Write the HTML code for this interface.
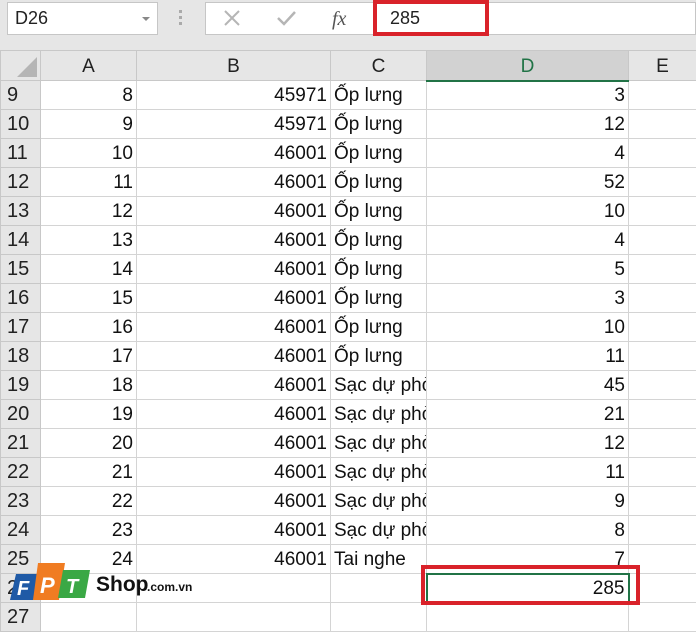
<!DOCTYPE html>
<html><head><meta charset="utf-8"><style>
*{margin:0;padding:0;box-sizing:border-box}
body{width:696px;height:618px;overflow:hidden;background:#fff;font-family:"Liberation Sans",sans-serif;position:relative}
.tb{position:absolute;left:0;top:0;width:696px;height:50px;background:#e6e6e6}
.nb{position:absolute;left:7px;top:2px;width:151px;height:33px;background:#fff;border:1px solid #c6c6c6;font-size:18px;line-height:31px;padding-left:7px;color:#222}
.nb .ar{position:absolute;right:7px;top:14px;border-left:4px solid transparent;border-right:4px solid transparent;border-top:4px solid #888}
.dots{position:absolute;left:179px;top:10px;width:3px;height:16px;background:repeating-linear-gradient(#aaa 0 3px,transparent 3px 6px)}
.fb{position:absolute;left:205px;top:2px;width:491px;height:33px;background:#fff;border:1px solid #c6c6c6}
.red1{position:absolute;left:373px;top:0px;width:116px;height:36px;border:4px solid #d9222a}
.fv{position:absolute;left:390px;top:2px;font-size:18px;line-height:33px;color:#222}
table{position:absolute;left:0;top:50px;width:696px;border-collapse:collapse;table-layout:fixed}
td{border:1px solid #d4d4d4;height:29px;font-size:19px;line-height:27px;padding:0 3px;white-space:nowrap;overflow:hidden;color:#111;vertical-align:bottom}
tr.h td{background:#e6e6e6;text-align:center;border-color:#c8c8c8;height:30px;color:#222}
td.rh{background:#e6e6e6;text-align:left;padding-left:6px;border-color:#c8c8c8;color:#222;font-size:20px}
td.r{text-align:right}
.red2{position:absolute;left:421px;top:565px;width:219px;height:40px;border:4px solid #d9222a}
</style></head><body>
<div class="tb"></div>
<div class="nb">D26<span class="ar"></span></div>
<div class="dots"></div>
<div class="fb">
<svg width="160" height="31" style="position:absolute;left:0;top:0">
<path d="M19 8 L33 22 M33 8 L19 22" stroke="#b5b5b5" stroke-width="2"/>
<path d="M72 15 L78 21 L89 9" stroke="#b5b5b5" stroke-width="2.5" fill="none"/>
<text x="126" y="22" font-family="Liberation Serif" font-style="italic" font-size="20" fill="#555">fx</text>
</svg></div>
<div class="fv">285</div>
<div class="red1"></div>
<table>
<colgroup><col style="width:40px"><col style="width:96px"><col style="width:194px"><col style="width:96px"><col style="width:202px"><col style="width:68px"></colgroup>
<tr class="h"><td style="position:relative"><svg width="30" height="26" style="position:absolute;left:8px;top:2px"><path d="M28 4 L28 24 L8 24 Z" fill="#b5b5b5"/></svg></td><td>A</td><td>B</td><td>C</td><td style="background:#d2d2d2;color:#217346;border-bottom:2px solid #217346">D</td><td>E</td></tr>
<tr><td class="rh">9</td><td class="r">8</td><td class="r">45971</td><td>Ốp lưng</td><td class="r">3</td><td></td></tr>
<tr><td class="rh">10</td><td class="r">9</td><td class="r">45971</td><td>Ốp lưng</td><td class="r">12</td><td></td></tr>
<tr><td class="rh">11</td><td class="r">10</td><td class="r">46001</td><td>Ốp lưng</td><td class="r">4</td><td></td></tr>
<tr><td class="rh">12</td><td class="r">11</td><td class="r">46001</td><td>Ốp lưng</td><td class="r">52</td><td></td></tr>
<tr><td class="rh">13</td><td class="r">12</td><td class="r">46001</td><td>Ốp lưng</td><td class="r">10</td><td></td></tr>
<tr><td class="rh">14</td><td class="r">13</td><td class="r">46001</td><td>Ốp lưng</td><td class="r">4</td><td></td></tr>
<tr><td class="rh">15</td><td class="r">14</td><td class="r">46001</td><td>Ốp lưng</td><td class="r">5</td><td></td></tr>
<tr><td class="rh">16</td><td class="r">15</td><td class="r">46001</td><td>Ốp lưng</td><td class="r">3</td><td></td></tr>
<tr><td class="rh">17</td><td class="r">16</td><td class="r">46001</td><td>Ốp lưng</td><td class="r">10</td><td></td></tr>
<tr><td class="rh">18</td><td class="r">17</td><td class="r">46001</td><td>Ốp lưng</td><td class="r">11</td><td></td></tr>
<tr><td class="rh">19</td><td class="r">18</td><td class="r">46001</td><td>Sạc dự phò</td><td class="r">45</td><td></td></tr>
<tr><td class="rh">20</td><td class="r">19</td><td class="r">46001</td><td>Sạc dự phò</td><td class="r">21</td><td></td></tr>
<tr><td class="rh">21</td><td class="r">20</td><td class="r">46001</td><td>Sạc dự phò</td><td class="r">12</td><td></td></tr>
<tr><td class="rh">22</td><td class="r">21</td><td class="r">46001</td><td>Sạc dự phò</td><td class="r">11</td><td></td></tr>
<tr><td class="rh">23</td><td class="r">22</td><td class="r">46001</td><td>Sạc dự phò</td><td class="r">9</td><td></td></tr>
<tr><td class="rh">24</td><td class="r">23</td><td class="r">46001</td><td>Sạc dự phò</td><td class="r">8</td><td></td></tr>
<tr><td class="rh">25</td><td class="r">24</td><td class="r">46001</td><td>Tai nghe</td><td class="r">7</td><td></td></tr>
<tr><td class="rh">26</td><td></td><td></td><td></td><td class="r" style="border:2px solid #217346">285</td><td></td></tr>
<tr><td class="rh">27</td><td></td><td></td><td></td><td></td><td></td></tr>
</table>
<div class="red2"></div>
<svg width="200" height="45" style="position:absolute;left:0;top:560px">
<path d="M16 14 L40 14 L35 40 L10 40 Z" fill="#1f5aa6"/>
<path d="M38 3 L65 3 L59 40 L33 40 Z" fill="#f07c22"/>
<path d="M63 10 L90 10 L85 38 L58 38 Z" fill="#3aa845"/>
<text x="17" y="35" font-family="Liberation Sans" font-weight="bold" font-style="italic" font-size="20" fill="#fff">F</text>
<text x="40" y="33" font-family="Liberation Sans" font-weight="bold" font-style="italic" font-size="22" fill="#fff">P</text>
<text x="66" y="33" font-family="Liberation Sans" font-weight="bold" font-style="italic" font-size="20" fill="#fff">T</text>
<text x="96" y="31" font-family="Liberation Sans" font-weight="bold" font-size="21" fill="#111">Shop</text>
<text x="147" y="31" font-family="Liberation Sans" font-weight="bold" font-size="12" fill="#111">.com.vn</text>
</svg>
</body></html>
